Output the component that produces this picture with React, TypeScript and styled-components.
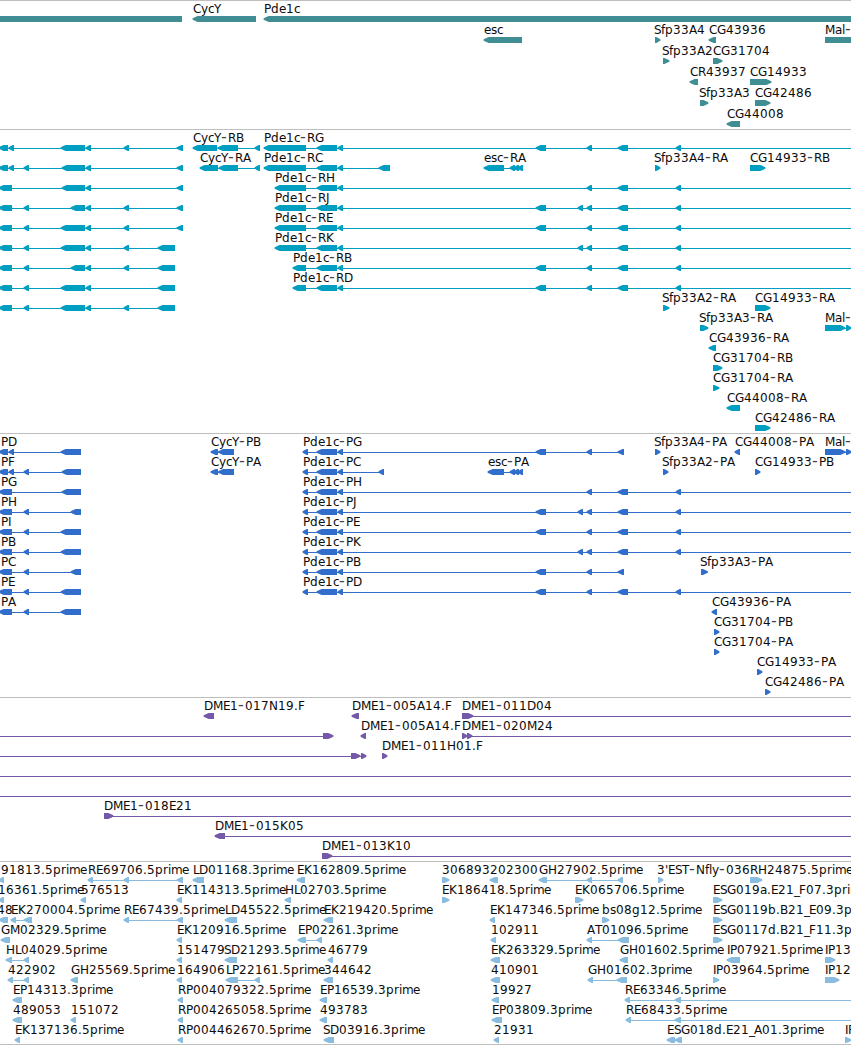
import React from 'react';
import styled, { createGlobalStyle } from 'styled-components';

type Dir = 'l' | 'r' | 'n';
type Block = [number, number];

interface Feature {
  dir: Dir;
  blocks: Block[];
  label?: string;
  at?: number;
  line?: Block;
}

interface TrackData {
  name: string;
  color: string;
  pitch: number;
  pad: number;
  rows: Feature[][];
}

const GlobalStyle = createGlobalStyle`
  body { margin: 0; background: #fff; overflow: hidden; }
`;

const Browser = styled.main`
  display: flex;
  flex-direction: column;
  width: 851px;
  height: 1045px;
  box-sizing: border-box;
  overflow: hidden;
  background: #fff;
  border-bottom: 1px solid #bebebe;
`;

const TrackPanel = styled.section<{ $pad: number }>`
  display: flex;
  flex-direction: column;
  flex: none;
  border-top: 1px solid #bebebe;
  padding-bottom: ${(p) => p.$pad}px;
`;

const Lane = styled.svg<{ $color: string; $height: number }>`
  display: block;
  flex: none;
  width: 851px;
  height: ${(p) => p.$height}px;
  overflow: visible;
  fill: ${(p) => p.$color};
`;

const Label = styled.text`
  font: 12px 'DejaVu Sans', sans-serif;
  fill: #0c0c0c;
  white-space: pre;
`;

const Dash = styled.tspan`
  font-size: 16px;
  fill: #444;
`;

/* Whole-pixel advance of each character in a label. */
const ADVANCE: Record<string, number> = {
  A: 8, B: 8, C: 8, D: 9, E: 7, F: 7, G: 9, H: 9, I: 3, J: 4, K: 8, L: 6, M: 10, N: 9,
  P: 7, R: 8, S: 7, T: 7, Y: 7, a: 7, b: 8, c: 6, d: 8, e: 7, f: 4, g: 8, i: 3, l: 3,
  m: 11, n: 7, p: 8, r: 5, s: 6, y: 7, '-': 7, '.': 4, "'": 3, _: 5,
};

interface Run {
  text: string;
  xs: number[];
}

/* Splits a label at its dashes, with the x of every character. */
const labelRuns = (text: string, start: number): Run[] => {
  const runs: Run[] = [];
  let x = start;
  for (const part of text.split(/(-)/).filter(Boolean)) {
    const xs: number[] = [];
    for (const ch of part) {
      xs.push(x);
      x += ADVANCE[ch] ?? 8;
    }
    runs.push({ text: part, xs });
  }
  return runs;
};

const TOP = 15;
const BOTTOM = 21;

const blockPath = ([s, e]: Block, dir: Dir): string => {
  if (dir === 'n') return `M${s} ${TOP}H${e}V${BOTTOM}H${s}Z`;
  const head = Math.min(4.6, e - s - 1.3);
  return dir === 'l'
    ? `M${s - 0.4} 17.2L${s + head} ${TOP}H${e}V${BOTTOM}H${s + head}L${s - 0.4} 18.7Z`
    : `M${e + 0.4} 17.2L${e - head} ${TOP}H${s}V${BOTTOM}H${e - head}L${e + 0.4} 18.7Z`;
};

const f = (dir: Dir, label: string, at: number, blocks: Block[], line?: Block): Feature => ({
  dir, label, at, blocks, line,
});
const bare = (dir: Dir, blocks: Block[], line?: Block): Feature => ({ dir, blocks, line });

/* Exons shared by several transcripts. */
const E24: Block = [24, 29];
const E61: Block = [61, 85];
const E62: Block = [62, 85];
const E71: Block = [71, 85];
const E86: Block = [86, 91];
const E124: Block = [124, 129];
const E158: Block = [158, 175];
const E177: Block = [177, 183];
const P317: Block = [317, 337];
const P338: Block = [338, 343];
const P536: Block = [536, 546];
const P578: Block = [578, 583];
const P587: Block = [587, 592];
const P618: Block = [618, 628];
const P676: Block = [676, 681];
const ESC: Block[] = [[510, 515], [514, 519], [518, 523]];
const MAL: Block[] = [[825, 845], [846, 851]];

const pde = (label: string, first: Block, rest: Block[], end = 851): Feature =>
  f('l', label, first[0], [first, P317, P338, ...rest], [first[0], end]);

const tracks: TrackData[] = [
  {
    name: 'genes', color: '#408e93', pitch: 21, pad: 2,
    rows: [
      [bare('n', [[0, 182]]), f('l', 'CycY', 193, [[193, 256]]), f('l', 'Pde1c', 264, [[264, 856]])],
      [
        f('l', 'esc', 484, [[484, 522]]), f('r', 'Sfp33A4', 654, [[655, 660]]),
        f('l', 'CG43936', 709, [[709, 716]]), f('n', 'Mal-', 825, [[825, 851]]),
      ],
      [f('r', 'Sfp33A2', 662, [[663, 669]]), f('r', 'CG31704', 713, [[713, 722]])],
      [f('l', 'CR43937', 690, [[690, 698]]), f('r', 'CG14933', 750, [[750, 771]])],
      [f('r', 'Sfp33A3', 699, [[700, 708]]), f('r', 'CG42486', 755, [[755, 770]])],
      [f('l', 'CG44008', 727, [[727, 740]])],
    ],
  },
  {
    name: 'transcripts', color: '#009fc1', pitch: 20, pad: 3,
    rows: [
      [
        bare('l', [[-1, 8], [9, 14], E61, E86, E124, E177]),
        f('l', 'CycY-RB', 193, [[193, 217], [218, 238], [255, 260]]),
        pde('Pde1c-RG', [264, 306], [P536, P587, P618, P676]),
      ],
      [
        bare('l', [[-1, 8], [9, 14], E24, E62, E86, E177]),
        f('l', 'CycY-RA', 200, [[200, 218], [219, 238], [255, 260]]),
        pde('Pde1c-RC', [264, 306], [[379, 390]], 390),
        f('l', 'esc-RA', 484, [[484, 504], ...ESC]),
        f('r', 'Sfp33A4-RA', 654, [[655, 660]]),
        f('r', 'CG14933-RB', 750, [[750, 765]]),
      ],
      [bare('l', [[-1, 12], E62, E86, E177]), pde('Pde1c-RH', [275, 306], [P587, P618, P676])],
      [
        bare('l', [[-1, 12], E24, E71, E86, E124, E177]),
        pde('Pde1c-RJ', [275, 306], [P536, P578, P587, P618, P676]),
      ],
      [
        bare('l', [[-1, 12], E24, E61, E86, E124, E177]),
        pde('Pde1c-RE', [275, 306], [P536, P587, P618, P676]),
      ],
      [
        bare('l', [[-1, 12], E24, E61, E86, E124, E158]),
        pde('Pde1c-RK', [275, 306], [P578, P587, P618, P676]),
      ],
      [
        bare('l', [[-1, 12], E24, E71, E86, E124, E158]),
        pde('Pde1c-RB', [293, 306], [P536, P587, P618, P676]),
      ],
      [
        bare('l', [[-1, 12], E24, E61, E86, E158]),
        pde('Pde1c-RD', [293, 306], [P536, P587, P618, P676]),
      ],
      [
        bare('l', [[-1, 12], E24, E61, E86, E124, E158]),
        f('r', 'Sfp33A2-RA', 662, [[663, 669]]),
        f('r', 'CG14933-RA', 755, [[755, 770]]),
      ],
      [f('r', 'Sfp33A3-RA', 699, [[700, 708]]), f('r', 'Mal-', 825, MAL)],
      [f('l', 'CG43936-RA', 709, [[709, 716]])],
      [f('r', 'CG31704-RB', 713, [[713, 722]])],
      [f('r', 'CG31704-RA', 713, [[713, 719]])],
      [f('l', 'CG44008-RA', 727, [[727, 740]])],
      [f('r', 'CG42486-RA', 755, [[755, 770]])],
    ],
  },
  {
    name: 'proteins', color: '#316ecb', pitch: 20, pad: 3,
    rows: [
      [
        f('l', 'PD', 1, [[-1, 8], [9, 14], [61, 81]]),
        f('l', 'CycY-PB', 211, [[211, 218], [218.5, 234]]),
        pde('Pde1c-PG', [303, 308], [P536, P587, [618, 624]], 624),
        f('r', 'Sfp33A4-PA', 654, [[655, 660]]),
        f('l', 'CG44008-PA', 735, [[735, 740]]),
        f('r', 'Mal-', 825, MAL),
      ],
      [
        f('l', 'PF', 1, [[-1, 8], [9, 14], E24, [62, 81]]),
        f('l', 'CycY-PA', 211, [[211, 218], [218.5, 234]]),
        pde('Pde1c-PC', [303, 308], [[379, 384]], 384),
        f('l', 'esc-PA', 488, [[488, 504], ...ESC]),
        f('r', 'Sfp33A2-PA', 662, [[663, 668]]),
        f('r', 'CG14933-PB', 755, [[755, 760]]),
      ],
      [f('l', 'PG', 1, [[-1, 12], [62, 81]]), pde('Pde1c-PH', [303, 308], [P587, P618, P676])],
      [
        f('l', 'PH', 1, [[-1, 12], E24, [71, 81]]),
        pde('Pde1c-PJ', [303, 308], [P536, P578, P587, P618, P676]),
      ],
      [
        f('l', 'PI', 1, [[-1, 12], E24, [61, 81]]),
        pde('Pde1c-PE', [303, 308], [P536, P587, P618, P676]),
      ],
      [
        f('l', 'PB', 1, [[-1, 12], E24, [61, 81]]),
        pde('Pde1c-PK', [303, 308], [P578, P587, P618, P676]),
      ],
      [
        f('l', 'PC', 1, [[-1, 12], E24, [71, 81]]),
        pde('Pde1c-PB', [303, 308], [P536, P587, [618, 624]], 624),
        f('r', 'Sfp33A3-PA', 700, [[701, 707.5]]),
      ],
      [
        f('l', 'PE', 1, [[-1, 12], E24, [61, 81]]),
        pde('Pde1c-PD', [303, 308], [P536, P587, P618, P676]),
      ],
      [f('l', 'PA', 1, [[-1, 12], E24, [61, 81]]), f('l', 'CG43936-PA', 712, [[712, 717]])],
      [f('r', 'CG31704-PB', 714, [[714, 719]])],
      [f('r', 'CG31704-PA', 714, [[714, 719]])],
      [f('r', 'CG14933-PA', 757, [[757, 762]])],
      [f('r', 'CG42486-PA', 765, [[765, 770]])],
    ],
  },
  {
    name: 'clones', color: '#7459a8', pitch: 20, pad: 3,
    rows: [
      [
        f('l', 'DME1-017N19.F', 204, [[204, 214]]),
        f('l', 'DME1-005A14.F', 352, [[352, 359]]),
        f('r', 'DME1-011D04', 462, [[462, 473]], [462, 851]),
      ],
      [
        bare('r', [[323, 333]], [0, 333]),
        f('l', 'DME1-005A14.F', 361, [[361, 366]]),
        f('r', 'DME1-020M24', 462, [[462, 467], [467, 472]], [462, 851]),
      ],
      [bare('r', [[351, 360], [361, 366]], [0, 366]), f('r', 'DME1-011H01.F', 382, [[382, 387]])],
      [bare('n', [], [0, 851])],
      [bare('n', [], [0, 851])],
      [f('r', 'DME1-018E21', 104, [[104, 113]], [104, 851])],
      [f('l', 'DME1-015K05', 215, [[215, 225]], [215, 851])],
      [f('r', 'DME1-013K10', 322, [[322, 332]], [322, 851])],
    ],
  },
  {
    name: 'ests', color: '#89bcde', pitch: 20, pad: 2,
    rows: [
      [
        f('l', '91813.5prime', 1, [[-1, 4]]),
        f('l', 'RE69706.5prime', 88, [[88, 93], E124, E177]),
        f('l', 'LD01168.3prime', 193, [[193, 204]]),
        f('l', 'EK162809.5prime', 297, [[297, 305]]),
        f('r', '306893', 442, [[442, 449]]),
        f('l', '202300', 490, [[490, 498]]),
        f('l', 'GH27902.5prime', 539, [[539, 547], P587, [618, 623]]),
        f('r', "3'EST-Nfly-036", 657, [[658, 663]]),
        f('r', 'RH24875.5prime', 750, [[750, 762]]),
      ],
      [
        f('l', '16361.5prime', -2, [[-1, 4]]),
        f('l', '576513', 81, [[81, 86]]),
        f('l', 'EK114313.5prime', 177, [[177, 182]]),
        f('l', 'HL02703.5prime', 285, [[285, 291]]),
        f('r', 'EK186418.5prime', 442, [[442, 449]]),
        f('r', 'EK065706.5prime', 575, [[575, 583]]),
        f('r', 'ESG019a.E21_F07.3prime', 713, [[713, 722]]),
      ],
      [
        f('l', '48', -3, [[-1, 8]]),
        f('l', 'EK270004.5prime', 11, [[11, 16], [24, 32]]),
        f('l', 'RE67439.5prime', 124, [E124, E177]),
        f('l', 'LD45522.5prime', 225, [[225, 237]]),
        f('l', 'EK219420.5prime', 324, [[324, 333]]),
        f('l', 'EK147346.5prime', 490, [[490, 495]]),
        f('r', 'bs08g12.5prime', 602, [[602, 609]]),
        f('r', 'ESG0119b.B21_E09.3prime', 713, [[713, 722]]),
      ],
      [
        f('l', 'GM02329.5prime', 1, [[1, 10]]),
        f('l', 'EK120916.5prime', 177, [[177, 182]]),
        f('l', 'EP02261.3prime', 298, [[298, 306], [317, 322]]),
        f('l', '102911', 491, [[491, 496]]),
        f('l', 'AT01096.5prime', 587, [P587, [618, 629]]),
        f('r', 'ESG0117d.B21_F11.3prime', 713, [[713, 722]]),
      ],
      [
        f('l', 'HL04029.5prime', 6, [[6, 12], E24]),
        f('l', '151479', 177, [[177, 182]]),
        f('l', 'SD21293.5prime', 224, [[225, 237]]),
        f('l', '46779', 328, [[328, 333]]),
        f('l', 'EK263329.5prime', 491, [[491, 500]]),
        f('l', 'GH01602.5prime', 620, [[620, 628]]),
        f('l', 'IP07921.5prime', 727, [[727, 740]]),
        f('r', 'IP13', 825, [[825, 835]]),
      ],
      [
        f('l', '422902', 8, [[8, 13], E24]),
        f('l', 'GH25569.5prime', 71, [[71, 78]]),
        f('l', '164906', 177, [[177, 182]]),
        f('l', 'LP22161.5prime', 226, [[226, 238], [255, 260]]),
        f('l', '344642', 324, [[324, 333]]),
        f('l', '410901', 491, [[491, 500]]),
        f('l', 'GH01602.3prime', 588, [[588, 593], [617, 627]]),
        f('r', 'IP03964.5prime', 713, [[713, 719]]),
        f('r', 'IP12', 825, [[825, 839]]),
      ],
      [
        f('l', 'EP14313.3prime', 13, [[13, 22]]),
        f('l', 'RP004079322.5prime', 178, [[178, 183]]),
        f('l', 'EP16539.3prime', 320, [[320, 327]]),
        f('l', '19927', 492, [[492, 499]]),
        f('l', 'RE63346.5prime', 625, [[625, 630], [675, 681]], [625, 851]),
      ],
      [
        f('l', '489053', 13, [[13, 22]]),
        f('l', '151072', 71, [[71, 76]]),
        f('l', 'RP004265058.5prime', 178, [[178, 183]]),
        f('l', '493783', 320, [[320, 327]]),
        f('l', 'EP03809.3prime', 492, [[492, 502]]),
        f('l', 'RE68433.5prime', 626, [[626, 631], [675, 681]], [626, 851]),
      ],
      [
        f('l', 'EK137136.5prime', 15, [[15, 20]]),
        f('l', 'RP004462670.5prime', 178, [[178, 183]]),
        f('l', 'SD03916.3prime', 323, [[324, 334]]),
        f('l', '21931', 494, [[494, 499]]),
        f('l', 'ESG018d.E21_A01.3prime', 667, [[667, 675], [675, 682]]),
        f('r', 'IP', 845, [[845, 851]]),
      ],
    ],
  },
];

const FeatureGlyph = ({ feature }: { feature: Feature }) => {
  const { blocks, dir, label, at, line } = feature;
  const span: Block | undefined =
    line ?? (blocks.length > 1 ? [blocks[0][0], blocks[blocks.length - 1][1]] : undefined);
  return (
    <g>
      {span && <rect x={span[0]} y={18} width={span[1] - span[0]} height={1} />}
      {blocks.length > 0 && <path d={blocks.map((b) => blockPath(b, dir)).join('')} />}
      {label && (
        <Label y={12}>
          {labelRuns(label, at ?? 0).map((run, i) =>
            run.text === '-' ? (
              <Dash key={i} x={run.xs[0]}>
                -
              </Dash>
            ) : (
              <tspan key={i} x={run.xs.join(' ')}>
                {run.text}
              </tspan>
            ),
          )}
        </Label>
      )}
    </g>
  );
};

const Track = ({ track }: { track: TrackData }) => (
  <TrackPanel $pad={track.pad} aria-label={track.name}>
    {track.rows.map((row, i) => (
      <Lane key={i} $color={track.color} $height={track.pitch}>
        {row.map((feature, j) => (
          <FeatureGlyph key={j} feature={feature} />
        ))}
      </Lane>
    ))}
  </TrackPanel>
);

export default function App() {
  return (
    <>
      <GlobalStyle />
      <Browser>
        {tracks.map((track) => (
          <Track key={track.name} track={track} />
        ))}
      </Browser>
    </>
  );
}
